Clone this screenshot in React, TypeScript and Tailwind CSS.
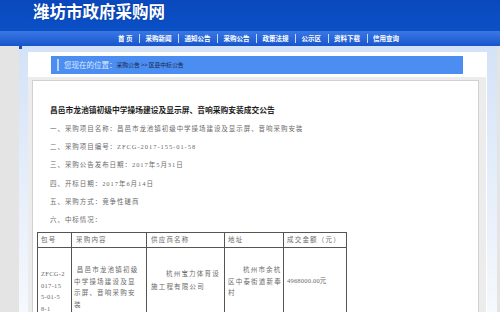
const navItems = ["首 页", "采购新闻", "通知公告", "采购公告", "政策法规", "公示区", "资料下载", "信用查询"];

const lines = [
  "一、采购项目名称：昌邑市龙池镇初级中学操场建设及显示屏、音响采购安装",
  "二、采购项目编号：ZFCG-2017-155-01-58",
  "三、采购公告发布日期：2017年5月31日",
  "四、开标日期：2017年6月14日",
  "五、采购方式：竞争性磋商",
  "六、中标情况：",
];

export default function App() {
  return (
    <div className="h-[312px] w-[500px] overflow-hidden bg-[#e4e4e4] font-['Liberation_Serif','Noto_Sans_CJK_SC',serif]">
      <header className="h-[31px] bg-gradient-to-b from-[#0a49bd] to-[#0b50c6] pl-[33px]">
        <h1 className="font-['Noto_Sans_CJK_SC',sans-serif] text-[16.5px] font-bold leading-[23px] text-white [text-shadow:0_0_2px_#0a3a9a]">
          潍坊市政府采购网
        </h1>
      </header>

      <nav className="flex h-[15px] items-center bg-gradient-to-b from-[#3a78e4] to-[#1855cc] pl-[118px] font-['Noto_Sans_CJK_SC',sans-serif] text-[6.5px] font-bold leading-none text-white">
        {navItems.map((item, i) => (
          <div key={item} className="flex items-center">
            <span className="whitespace-pre">{item}</span>
            {i < navItems.length - 1 && <span className="ml-[7px] mr-[5px] h-[9px] w-[1px] bg-[#c6dafc]" />}
          </div>
        ))}
      </nav>

      <div className="flex">
        <div className="w-[19px]" />
        <div className="relative h-[270px] w-[478px] bg-gradient-to-b from-[#d4e2f7] to-[#f6f9fd] pl-[9px] pr-[10px] pt-[6px]">
          <div className="absolute left-0 top-0 h-[3px] w-[3px] bg-[#1a4fb8]" />
          <div className="h-full bg-white pt-[4px]">
            <div className="ml-[23px] flex h-[18px] w-[412px] items-center bg-[#4b8df0] pl-[6px]">
              <span className="h-[12px] w-[2px] bg-[#b6d0fa]" />
              <span className="ml-[5px] font-['Noto_Sans_CJK_SC',sans-serif] text-[7.5px] leading-none text-[#dfeaff]">您现在的位置：</span>
              <span className="font-['Noto_Sans_CJK_SC',sans-serif] text-[5.8px] leading-none text-[#16284a]">
                采购公告 &gt;&gt; 区县中标公告
              </span>
            </div>

            <div className="mr-[1px] mt-[3px] h-full bg-[#ececec] pl-[4px] pr-[7px] pt-[3px]">
              <div className="h-full border border-[#d0d0d0] bg-white pl-[4px] pt-[23px]">
                <h2 className="pl-[13px] font-['Noto_Sans_CJK_SC',sans-serif] text-[7.75px] font-bold leading-[12px] text-[#1e1e1e]">
                  昌邑市龙池镇初级中学操场建设及显示屏、音响采购安装成交公告
                </h2>
                <div className="mt-[4px] pl-[13px] text-[6.5px] leading-[18.2px] tracking-[0.95px] text-[#6a6a6a]">
                  {lines.map((l) => (
                    <p key={l} className="whitespace-nowrap">{l}</p>
                  ))}
                </div>

                <table className="mt-[3px] border-collapse text-[6.5px] leading-[11.5px] tracking-[1.2px] text-[#6a6a6a]">
                  <colgroup>
                    <col className="w-[34px]" />
                    <col className="w-[75px]" />
                    <col className="w-[78px]" />
                    <col className="w-[59px]" />
                    <col className="w-[63px]" />
                  </colgroup>
                  <thead>
                    <tr className="h-[15px]">
                      <td className="border border-[#555] pl-[3px] align-middle">包号</td>
                      <td className="border border-[#555] pl-[4px] align-middle">采购内容</td>
                      <td className="border border-[#555] pl-[4px] align-middle">供应商名称</td>
                      <td className="border border-[#555] pl-[3px] align-middle">地址</td>
                      <td className="border border-[#555] pl-[3px] align-middle">成交金额（元）</td>
                    </tr>
                  </thead>
                  <tbody>
                    <tr className="h-[80px]">
                      <td className="border border-[#555] pl-[3px] pt-[20px] align-top tracking-[0.3px]">
                        ZFCG-2<br />017-15<br />5-01-5<br />8-1
                      </td>
                      <td className="border border-[#555] pl-[2px] pt-[16px] align-top whitespace-nowrap">
                        &nbsp;昌邑市龙池镇初级<br />中学操场建设及显<br />示屏、音响采购安<br />装
                      </td>
                      <td className="border border-[#555] pl-[4px] pt-[19px] align-top leading-[13px] whitespace-nowrap">
                        <span className="pl-[15px]">杭州宝力体育设</span><br />施工程有限公司
                      </td>
                      <td className="border border-[#555] pl-[3px] pt-[16px] align-top whitespace-nowrap">
                        <span className="pl-[15px]">杭州市余杭</span><br />区中泰街道新奉<br />村
                      </td>
                      <td className="border border-[#555] pl-[3px] pt-[27px] align-top tracking-[0.2px] whitespace-nowrap">
                        4968000.00元
                      </td>
                    </tr>
                  </tbody>
                </table>
              </div>
            </div>
          </div>
        </div>
        <div className="w-[3px]" />
      </div>
    </div>
  );
}
